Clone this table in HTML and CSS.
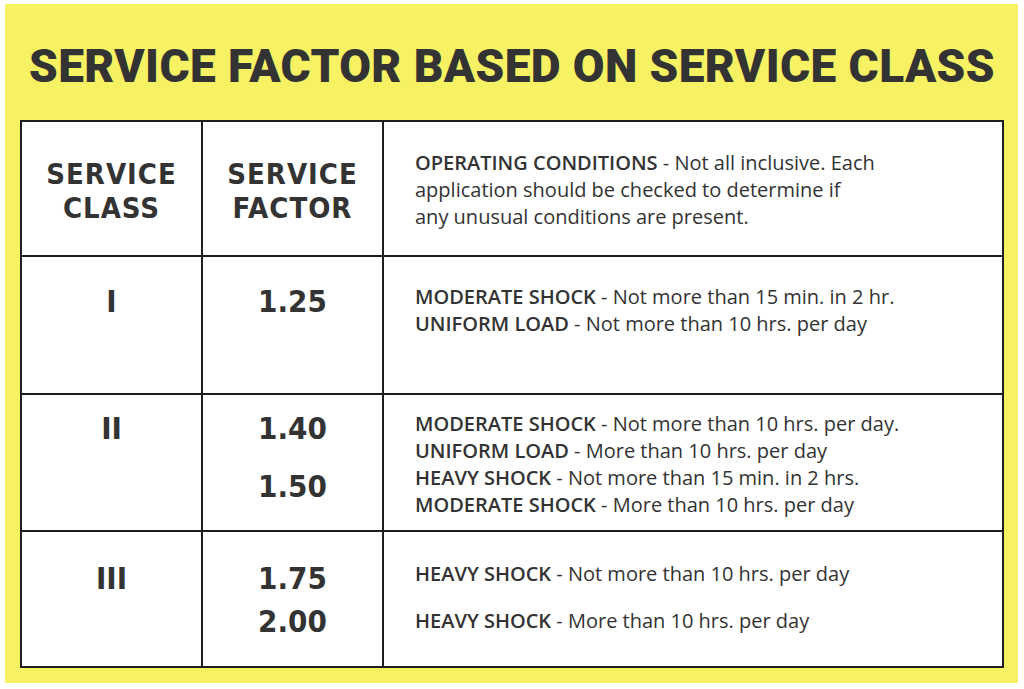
FILE: index.html
```html
<!DOCTYPE html>
<html lang="en">
<head>
<meta charset="utf-8">
<title>Service Factor Based on Service Class</title>
<link rel="stylesheet" href="styles.css">
</head>
<body>
<div class="panel">
  <h1 class="title">SERVICE FACTOR BASED ON SERVICE CLASS</h1>
  <div class="grid">
    <div class="cell head-cell"><div class="label">SERVICE<br>CLASS</div></div>
    <div class="cell head-cell"><div class="label">SERVICE<br>FACTOR</div></div>
    <div class="cell text-cell head-text">
      <p class="line"><b>OPERATING CONDITIONS</b> - Not all inclusive. Each<br>application should be checked to determine if<br>any unusual conditions are present.</p>
    </div>

    <div class="cell num-cell r1"><div class="num">I</div></div>
    <div class="cell num-cell r1"><div class="num">1.25</div></div>
    <div class="cell text-cell t1">
      <p class="line"><b>MODERATE SHOCK</b> - Not more than 15 min. in 2 hr.</p>
      <p class="line"><b>UNIFORM LOAD</b> - Not more than 10 hrs. per day</p>
    </div>

    <div class="cell num-cell r2"><div class="num">II</div></div>
    <div class="cell num-cell r2"><div class="num">1.40</div><div class="num gap-lg">1.50</div></div>
    <div class="cell text-cell t2">
      <p class="line"><b>MODERATE SHOCK</b> - Not more than 10 hrs. per day.</p>
      <p class="line"><b>UNIFORM LOAD</b> - More than 10 hrs. per day</p>
      <p class="line"><b>HEAVY SHOCK</b> - Not more than 15 min. in 2 hrs.</p>
      <p class="line"><b>MODERATE SHOCK</b> - More than 10 hrs. per day</p>
    </div>

    <div class="cell num-cell r3"><div class="num">III</div></div>
    <div class="cell num-cell r3"><div class="num">1.75</div><div class="num gap-sm">2.00</div></div>
    <div class="cell text-cell t3">
      <p class="line"><b>HEAVY SHOCK</b> - Not more than 10 hrs. per day</p>
      <p class="line gap-text"><b>HEAVY SHOCK</b> - More than 10 hrs. per day</p>
    </div>
  </div>
</div>
</body>
</html>
```
FILE: styles.css
```css
html, body {
  margin: 0;
  padding: 0;
  background: #ffffff;
}

.panel {
  margin: 4px 6px 0 5px;
  height: 679px;
  box-sizing: border-box;
  padding: 35px 14px 0 15px;
  background: #f7f263;
}

.title {
  margin: 0 0 27px 0;
  font-family: Roboto, "DejaVu Sans", sans-serif;
  font-weight: 900;
  font-size: 46px;
  line-height: 54px;
  letter-spacing: 0.4px;
  white-space: nowrap;
  text-align: center;
  color: #333333;
}

.grid {
  display: grid;
  grid-template-columns: 179px 179px 1fr;
  grid-template-rows: 133px 136px 135px 134px;
  gap: 2px;
  padding: 2px;
  background: #1e1e1e;
}

.cell {
  background: #ffffff;
  box-sizing: border-box;
}

.head-cell {
  padding-top: 35px;
  text-align: center;
}

.label {
  font-family: "DejaVu Sans", sans-serif;
  font-stretch: condensed;
  font-weight: bold;
  font-size: 29px;
  line-height: 34px;
  letter-spacing: 1px;
  color: #333333;
}

.num-cell {
  text-align: center;
}

.num {
  font-family: "DejaVu Sans", sans-serif;
  font-stretch: condensed;
  font-weight: bold;
  font-size: 31px;
  line-height: 34px;
  color: #333333;
}

.r1 { padding-top: 27px; }
.r2 { padding-top: 16px; }
.r3 { padding-top: 29px; }

.gap-lg { margin-top: 24px; }
.gap-sm { margin-top: 9px; }

.text-cell {
  padding-left: 31px;
  font-family: "Open Sans", "Liberation Sans", sans-serif;
  font-size: 20px;
  line-height: 27px;
  color: #333333;
}

.text-cell b {
  font-weight: 600;
}

.line {
  margin: 0;
}

.head-text { padding-top: 27px; }
.t1 { padding-top: 26px; }
.t2 { padding-top: 15px; }
.t3 { padding-top: 28px; }

.gap-text { margin-top: 20px; }
```
